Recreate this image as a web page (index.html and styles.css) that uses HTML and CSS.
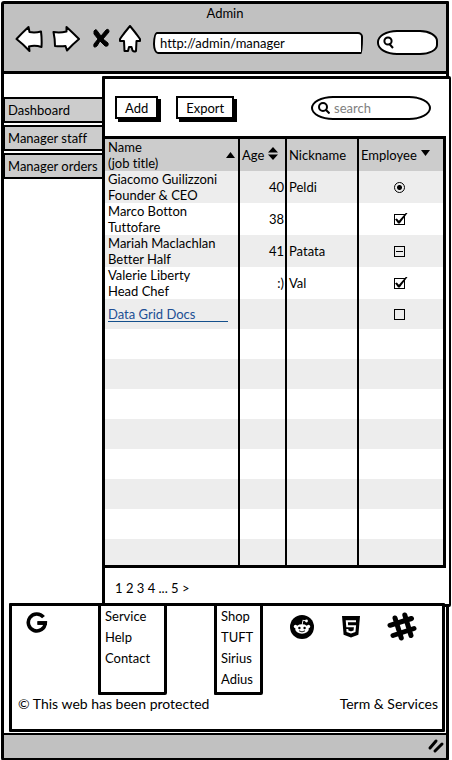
FILE: index.html
```html
<!DOCTYPE html>
<html lang="en">
<head>
<meta charset="utf-8">
<meta name="viewport" content="width=device-width, initial-scale=1">
<title>Admin</title>
<link rel="stylesheet" href="styles.css">
</head>
<body>
<div class="window">
  <header class="chrome">
    <h1 class="title">Admin</h1>
    <div class="nav">
      <button class="icon-button back" aria-label="Back"><svg width="28" height="28" viewBox="0 0 28 28"><path d="M1.500 14Q7 8 13.500 2L14.500 7Q20 8 26 6.500Q27 14 26.500 22Q20 20 14 21.500L14.500 26Q8 19 1.500 14Z"/></svg></button>
      <button class="icon-button forward" aria-label="Forward"><svg width="28" height="28" viewBox="0 0 28 28"><path d="M1.500 7Q8 8 14.500 6.500L14.500 2Q21 8 27 14Q21 19 15 25.500L13.500 21Q8 21.500 3 21Q3 14 1.500 7Z"/></svg></button>
      <button class="icon-button stop" aria-label="Stop"><svg width="18" height="22" viewBox="0 0 18 22"><path class="solid" d="M2 3Q4 0 6 4L9 8L14 2Q17 0 17 4L11 11L16 15Q17 19 13 18L8 13L5 18Q1 21 2 16L6 11L2 6Z"/></svg></button>
      <button class="icon-button home" aria-label="Home"><svg width="24" height="28" viewBox="0 0 24 28"><path d="M12 1Q17 7 22 14L22 16L18.500 16L18 26Q16 27 14.500 25.500L13.500 22L11 22L10 26L6.500 26L6 16L2 16L2 14Q6 8 12 1Z"/></svg></button>
      <input class="address" type="text" aria-label="Address" value="http://admin/manager">
      <label class="browser-search">
        <svg width="11" height="13" viewBox="0 0 11 13"><circle cx="5" cy="5" r="3.600"/><path d="M6 7.500L10 12"/></svg>
        <input type="text" aria-label="Web search">
      </label>
    </div>
  </header>

  <div class="workspace">
    <nav class="sidebar">
      <a href="#">Dashboard</a>
      <a href="#">Manager staff</a>
      <a href="#">Manager orders</a>
    </nav>
    <main class="panel">
      <div class="toolbar">
        <button class="action">Add</button>
        <button class="action">Export</button>
        <label class="search">
          <svg width="12" height="12" viewBox="0 0 12 12"><circle cx="5" cy="5" r="4"/><path d="M7.500 7.500L11.500 11.500"/></svg>
          <input type="search" aria-label="Search" placeholder="search">
        </label>
      </div>
      <table class="grid">
        <colgroup><col class="c-name"><col class="c-age"><col class="c-nick"><col></colgroup>
        <thead>
          <tr>
            <th><button class="sort spread"><span>Name<br>(job title)</span><svg width="9" height="6" viewBox="0 0 9 6"><path d="M0 6L4.500 0L9 6Z"/></svg></button></th>
            <th><button class="sort">Age<svg class="raised" width="10" height="13" viewBox="0 0 10 13"><path d="M0 5.500L5 0L10 5.500ZM0 7.500L5 13L10 7.500Z"/></svg></button></th>
            <th>Nickname</th>
            <th><button class="sort">Employee<svg class="raised" width="9" height="6" viewBox="0 0 9 6"><path d="M0 0L4.500 6L9 0Z"/></svg></button></th>
          </tr>
        </thead>
        <tbody>
          <tr><td>Giacomo Guilizzoni<br>Founder &amp; CEO</td><td class="num">40</td><td>Peldi</td><td class="mark"><input type="radio" aria-label="Giacomo is an employee" checked></td></tr>
          <tr><td>Marco Botton<br>Tuttofare</td><td class="num">38</td><td></td><td class="mark"><input type="checkbox" aria-label="Marco is an employee" checked></td></tr>
          <tr><td>Mariah Maclachlan<br>Better Half</td><td class="num">41</td><td>Patata</td><td class="mark"><input class="partial" type="checkbox" aria-label="Mariah is an employee"></td></tr>
          <tr><td>Valerie Liberty<br>Head Chef</td><td class="num">:)</td><td>Val</td><td class="mark"><input type="checkbox" aria-label="Valerie is an employee" checked></td></tr>
          <tr class="short"><td><a class="docs" href="#">Data Grid Docs</a></td><td></td><td></td><td class="mark"><input type="checkbox" aria-label="Employee"></td></tr>
          <tr class="short"><td></td><td></td><td></td><td></td></tr>
          <tr class="short"><td></td><td></td><td></td><td></td></tr>
          <tr class="short"><td></td><td></td><td></td><td></td></tr>
          <tr class="short"><td></td><td></td><td></td><td></td></tr>
          <tr class="short"><td></td><td></td><td></td><td></td></tr>
          <tr class="short"><td></td><td></td><td></td><td></td></tr>
          <tr class="short"><td></td><td></td><td></td><td></td></tr>
          <tr class="last"><td></td><td></td><td></td><td></td></tr>
        </tbody>
      </table>
      <nav class="pages" aria-label="Pages"><a href="#">1</a> <a href="#">2</a> <a href="#">3</a> <a href="#">4</a> ... <a href="#">5</a> <a href="#">&gt;</a></nav>
    </main>
  </div>

  <footer class="footer">
    <div class="footer-top">
      <a class="brand" href="#" aria-label="Google"><svg width="22" height="22" viewBox="0 0 22 22"><path d="M17.500 5.200A8.500 8.500 0 1 0 19.300 11H11.500" fill="none" stroke="#000" stroke-width="3.600"/><path d="M11.500 9.200H21V12.800H11.500Z"/></svg></a>
      <ul class="links service"><li><a href="#">Service</a></li><li><a href="#">Help</a></li><li><a href="#">Contact</a></li></ul>
      <ul class="links shop"><li><a href="#">Shop</a></li><li><a href="#">TUFT</a></li><li><a href="#">Sirius</a></li><li><a href="#">Adius</a></li></ul>
      <div class="social">
        <a href="#" aria-label="Reddit"><svg width="24" height="24" viewBox="0 0 24 24"><circle cx="12" cy="12" r="12"/><g fill="#fff"><ellipse cx="12" cy="14" rx="6.800" ry="4.700"/><circle cx="5.500" cy="11.500" r="1.700"/><circle cx="18.500" cy="11.500" r="1.700"/><circle cx="16.500" cy="6" r="1.400"/><path d="M11.600 10L12.700 4.800L16.500 5.600V6.400L13.400 5.800L12.500 10Z"/></g><circle cx="9.400" cy="13" r="1.200"/><circle cx="14.600" cy="13" r="1.200"/><path d="M9 15.800Q12 18 15 15.800" fill="none" stroke="#000" stroke-width=".9"/></svg></a>
        <a href="#" aria-label="HTML5"><svg width="20" height="22" viewBox="0 0 20 22"><path d="M1 0H19L17.400 18.800L10 21.500L2.600 18.800Z"/><path d="M15 5.300H5.800L6.200 10.200H14L13.500 15.300L10 16.500L6.500 15.300L6.300 13" fill="none" stroke="#fff" stroke-width="2"/></svg></a>
        <a href="#" aria-label="Slack"><svg width="30" height="30" viewBox="0 0 30 30"><path d="M8 6L14.300 26M17.800 3L24 23.500M3 13.300L24.500 6.500M6 23.500L27 16.500" fill="none" stroke="#000" stroke-width="5" stroke-linecap="round"/></svg></a>
      </div>
    </div>
    <div class="legal"><span>© This web has been protected</span><a href="#">Term &amp; Services</a></div>
  </footer>
  <div class="status"><svg width="18" height="16" viewBox="0 0 18 16"><path d="M3 10L9 3M8 13L15 6"/></svg></div>
</div>
</body>
</html>
```
FILE: styles.css
```css
* { box-sizing: border-box; }
body {
  margin: 0;
  background: #fff;
  color: #000;
  font: 13px/16px Lato, "Open Sans", sans-serif;
  font-variant-ligatures: none;
}
a { color: inherit; text-decoration: none; }
button, input { font: inherit; color: inherit; margin: 0; }
button { padding: 0; border: 0; background: none; }
svg { display: block; flex: none; }

.window {
  margin: 1px 3px 1px 1px;
  border: 3px solid #000;
  border-radius: 3px 1px 2px 3px;
}

/* browser chrome */
.chrome {
  height: 70px;
  border-bottom: 3px solid #000;
  background: #c1c1c1;
}
.title { margin: 0; padding-top: 1px; font-size: 13px; font-weight: 400; line-height: 16px; text-align: center; }
.nav { display: flex; align-items: center; padding: 1px 8px 0 11px; }
.icon-button path { fill: #fff; stroke: #000; stroke-width: 2; stroke-linejoin: round; }
.icon-button .solid { fill: #000; stroke-width: 1; }
.forward { margin-left: 9px; }
.stop { margin-left: 12px; }
.home { margin-left: 8px; }
.address {
  flex: 1;
  min-width: 0;
  height: 22px;
  margin: 8px 14px 0 11px;
  padding: 0 5px;
  border: 2px solid #000;
  border-radius: 4px 5px 2px 5px / 12px 5px 16px 10px;
  background: #fff;
}
.browser-search {
  display: flex;
  align-items: center;
  width: 61px;
  height: 25px;
  margin-top: 8px;
  padding-left: 4px;
  border: 2px solid #000;
  border-radius: 20px 18px 18px 20px / 12px 11px 10px 12px;
  background: #fff;
}
.browser-search input, .search input { width: 100%; min-width: 0; padding: 0; border: 0; outline: 0; background: none; }
.browser-search svg, .search svg { fill: none; stroke: #000; stroke-width: 2; }

/* sidebar and panel */
.workspace { display: flex; }
.sidebar { display: flex; flex-direction: column; gap: 2px; width: 98px; padding-top: 23px; }
.sidebar a {
  height: 26px;
  padding-left: 3px;
  border: solid #000;
  border-width: 2px 0 2px 1px;
  background: #ccc;
  line-height: 23px;
  white-space: nowrap;
}
.panel {
  flex: 1;
  min-width: 0;
  margin: 2px -5px 0 0;
  border: 3px solid #000;
  border-right-width: 2px;
  border-radius: 1px 2px 2px 0;
  background: #fff;
}
.toolbar { display: flex; align-items: center; height: 57px; padding: 0 18px 0 10px; }
.action {
  height: 23px;
  margin-right: 18px;
  padding: 0 8px;
  border: 2px solid #000;
  background: #fff;
  box-shadow: 3px 3px 0 #000;
}
.search {
  display: flex;
  align-items: center;
  gap: 4px;
  width: 120px;
  height: 24px;
  margin-left: auto;
  padding: 0 12px 0 5px;
  border: 2px solid #000;
  border-radius: 22px / 12px;
}
.search input::placeholder { color: #808080; opacity: 1; }

/* data grid */
.grid {
  width: 100%;
  margin-left: -3px;
  border: 3px solid #000;
  border-spacing: 0;
  table-layout: fixed;
}
.c-name { width: 135px; }
.c-age { width: 47px; }
.c-nick { width: 72px; }
.grid th, .grid td { height: 32px; padding: 0 2px; text-align: left; font-weight: 400; white-space: nowrap; }
.grid th { background: #ccc; }
.grid th:first-child, .grid td:first-child { padding: 0 3px; }
.grid th:not(:last-child), .grid td:not(:last-child) { border-right: 2px solid #000; }
.grid tbody tr:nth-child(odd) { background: #ededed; }
.grid .short td { height: 30px; }
.grid .last td { height: 26px; }
.grid .num { padding-right: 1px; text-align: right; }
.grid .mark { padding-right: 6px; text-align: center; line-height: 0; }
.sort { display: flex; align-items: center; gap: 4px; text-align: left; }
.sort.spread { width: 100%; justify-content: space-between; }
.raised { margin-bottom: 4px; }
.docs { display: block; width: 120px; border-bottom: 1px solid #14508c; color: #214f94; line-height: 14px; }
.mark input {
  appearance: none;
  width: 11px;
  height: 11px;
  border: 1px solid #000;
}
.mark input[type="radio"] {
  border-radius: 50%;
  background: radial-gradient(circle, #000 2px, transparent 3px);
}
.mark .partial { background: linear-gradient(#000, #000) center / 7px 1px no-repeat; }
.mark input[type="checkbox"]:checked { position: relative; }
.mark input[type="checkbox"]:checked::after {
  content: "";
  position: absolute;
  left: 0;
  top: -2px;
  width: 13px;
  height: 12px;
  background: #000;
  clip-path: polygon(4% 56%, 18% 50%, 34% 68%, 90% 0, 100% 5%, 40% 92%, 28% 92%);
}
.pages { height: 36px; padding: 12px 10px 0; }

/* footer */
.footer {
  position: relative;
  margin: -4px 1px 0 5px;
  border: 3px solid #000;
  border-radius: 1px;
  background: #fff;
}
.footer-top { display: flex; align-items: flex-start; }
.brand { padding: 6px 0 0 14px; }
.links {
  margin: -3px 0 0;
  padding: 0 4px;
  height: 92px;
  border: 3px solid #000;
  border-radius: 1px 2px 2px 1px;
  list-style: none;
  line-height: 21px;
}
.service { width: 69px; margin-left: 50px; }
.shop { width: 49px; margin-left: 47px; }
.social { display: flex; align-items: center; justify-content: space-between; width: 127px; margin: 6px 25px 0 auto; }
.legal { display: flex; justify-content: space-between; height: 34px; padding: 1px 4px 0 6px; font-size: 14px; }
.status {
  display: flex;
  align-items: center;
  justify-content: flex-end;
  height: 25px;
  margin-top: 1px;
  padding: 0 1px 1px 0;
  border-top: 2px solid #000;
  background: #c1c1c1;
}
.status path { fill: none; stroke: #000; stroke-width: 3; stroke-linecap: round; }
```
